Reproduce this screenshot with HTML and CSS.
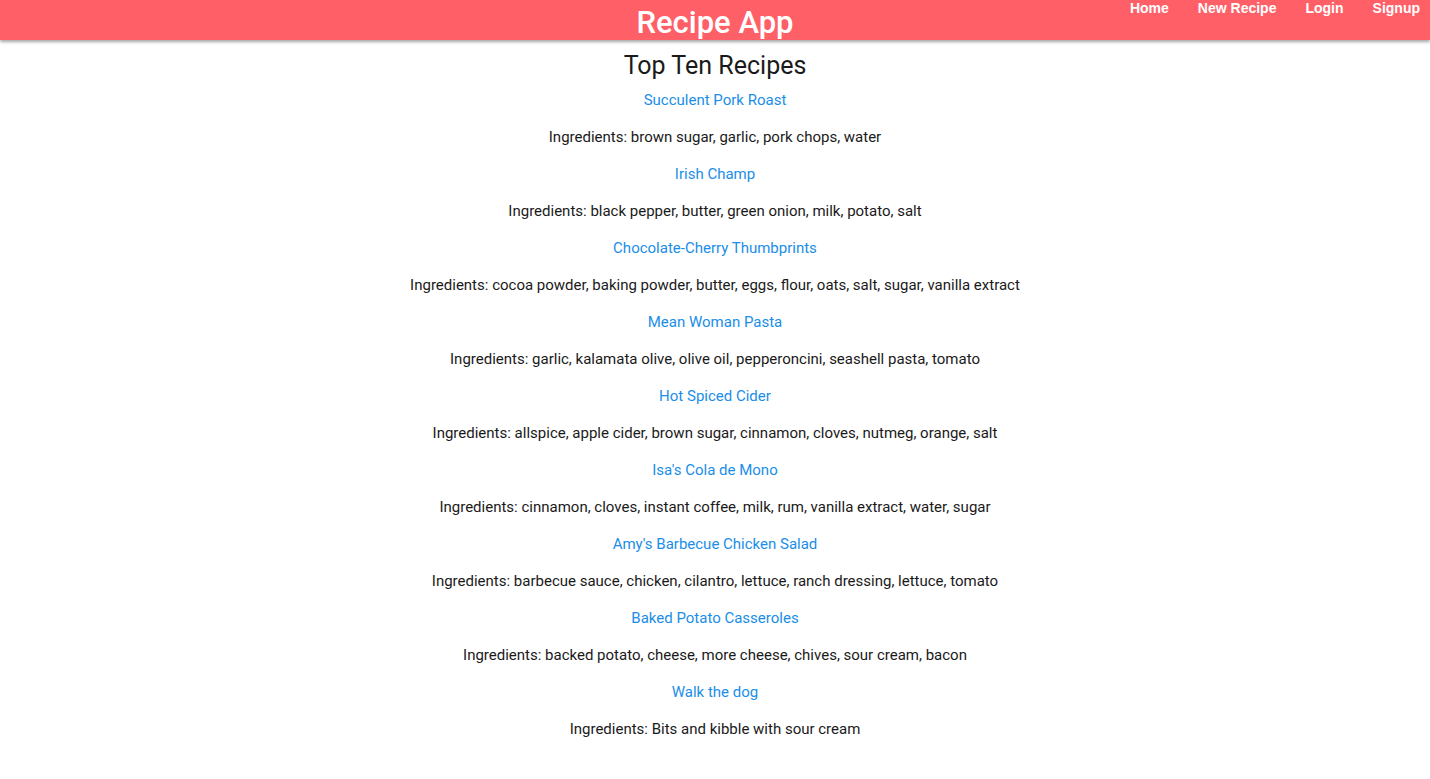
FILE: index.html
```html
<!DOCTYPE html>
<html>
<head>
<meta charset="utf-8">
<title>Recipe App</title>
<link rel="stylesheet" href="styles.css">
</head>
<body>
<header class="topbar">
  <h1 class="brand">Recipe App</h1>
  <nav class="nav">
    <a href="#">Home</a>
    <a href="#">New Recipe</a>
    <a href="#">Login</a>
    <a href="#">Signup</a>
  </nav>
</header>
<main class="content">
  <h2 class="heading">Top Ten Recipes</h2>
  <ul class="recipes">
    <li><a class="recipe-link" href="#">Succulent Pork Roast</a><p class="ingredients">Ingredients: brown sugar, garlic, pork chops, water</p></li>
    <li><a class="recipe-link" href="#">Irish Champ</a><p class="ingredients">Ingredients: black pepper, butter, green onion, milk, potato, salt</p></li>
    <li><a class="recipe-link" href="#">Chocolate-Cherry Thumbprints</a><p class="ingredients">Ingredients: cocoa powder, baking powder, butter, eggs, flour, oats, salt, sugar, vanilla extract</p></li>
    <li><a class="recipe-link" href="#">Mean Woman Pasta</a><p class="ingredients">Ingredients: garlic, kalamata olive, olive oil, pepperoncini, seashell pasta, tomato</p></li>
    <li><a class="recipe-link" href="#">Hot Spiced Cider</a><p class="ingredients">Ingredients: allspice, apple cider, brown sugar, cinnamon, cloves, nutmeg, orange, salt</p></li>
    <li><a class="recipe-link" href="#">Isa's Cola de Mono</a><p class="ingredients">Ingredients: cinnamon, cloves, instant coffee, milk, rum, vanilla extract, water, sugar</p></li>
    <li><a class="recipe-link" href="#">Amy's Barbecue Chicken Salad</a><p class="ingredients">Ingredients: barbecue sauce, chicken, cilantro, lettuce, ranch dressing, lettuce, tomato</p></li>
    <li><a class="recipe-link" href="#">Baked Potato Casseroles</a><p class="ingredients">Ingredients: backed potato, cheese, more cheese, chives, sour cream, bacon</p></li>
    <li><a class="recipe-link" href="#">Walk the dog</a><p class="ingredients">Ingredients: Bits and kibble with sour cream</p></li>
  </ul>
</main>
</body>
</html>
```
FILE: styles.css
```css
html, body {
  margin: 0;
  padding: 0;
  background: #ffffff;
  font-family: Roboto, "Liberation Sans", sans-serif;
  color: #1a1a1a;
}

.topbar {
  position: relative;
  height: 40px;
  background: #ff6068;
  box-shadow: 0 2px 3px rgba(0, 0, 0, 0.35);
  display: flex;
  justify-content: center;
  overflow: hidden;
}

.brand {
  margin: 0;
  font-size: 31px;
  font-weight: 500;
  color: #ffffff;
  line-height: 46px;
}

.nav {
  position: absolute;
  top: 0;
  right: 10px;
  display: flex;
  gap: 29px;
}

.nav a {
  color: #ffffff;
  text-decoration: none;
  font-family: "Liberation Sans", Arial, sans-serif;
  font-weight: 700;
  font-size: 14px;
  line-height: 16px;
}

.content {
  text-align: center;
}

.heading {
  margin: 11px 0 1px;
  font-size: 25px;
  font-weight: 400;
  line-height: 30px;
  color: #1a1a1a;
}

.recipes {
  list-style: none;
  margin: 0;
  padding: 0;
  display: flex;
  flex-direction: column;
  align-items: center;
}

.recipes li {
  display: flex;
  flex-direction: column;
  align-items: center;
}

.recipe-link {
  display: block;
  margin-top: 8px;
  color: #1a8ee8;
  text-decoration: none;
  font-size: 15px;
  line-height: 21px;
}

.ingredients {
  margin: 16px 0 8px;
  font-size: 15px;
  line-height: 21px;
}
```
